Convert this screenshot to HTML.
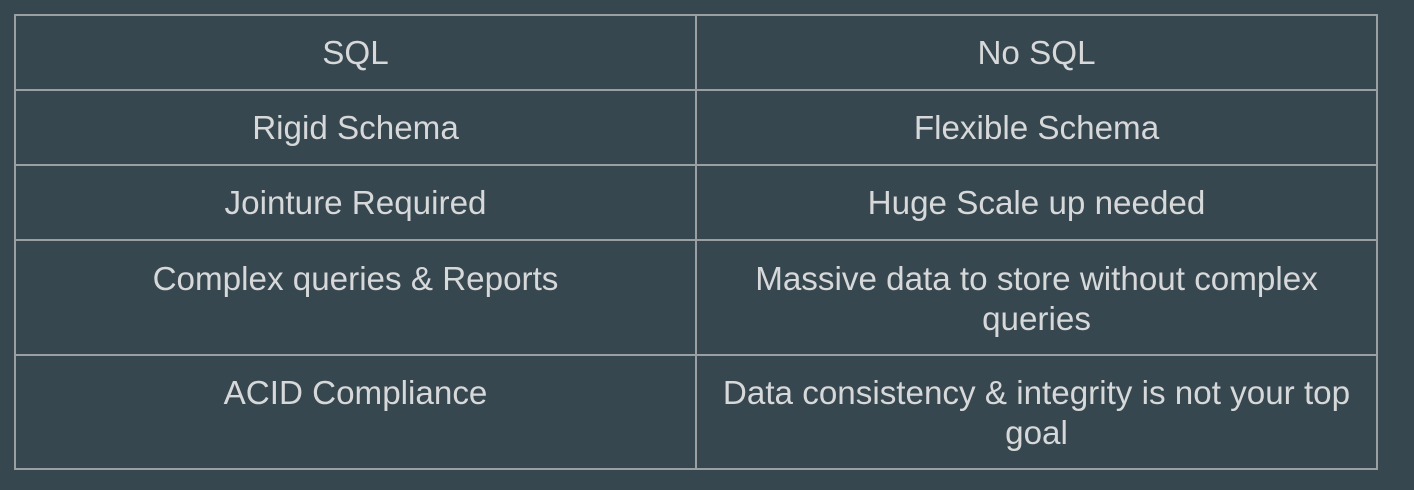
<!DOCTYPE html>
<html><head><style>
body{margin:0;width:1414px;height:490px;background:#37474f;overflow:hidden;font-family:"Liberation Sans",Arial,sans-serif;}
.h{position:absolute;left:14px;width:1364px;height:2px;background:#9a9fa2;}
.v{position:absolute;top:14px;height:456px;width:2px;background:#9a9fa2;}
.c{position:absolute;color:#d6d8d9;font-size:33.2px;line-height:40px;text-align:center;display:flex;align-items:center;justify-content:center;white-space:nowrap;}
</style></head><body>
<div class="h" style="top:14px"></div>
<div class="h" style="top:89px"></div>
<div class="h" style="top:164px"></div>
<div class="h" style="top:239px"></div>
<div class="h" style="top:354px"></div>
<div class="h" style="top:468px"></div>
<div class="v" style="left:14px"></div>
<div class="v" style="left:695px"></div>
<div class="v" style="left:1376px"></div>

<div class="c" style="left:16px;width:679px;top:17px;height:73px">SQL</div>
<div class="c" style="left:697px;width:679px;top:17px;height:73px">No SQL</div>
<div class="c" style="left:16px;width:679px;top:92px;height:73px">Rigid Schema</div>
<div class="c" style="left:697px;width:679px;top:92px;height:73px">Flexible Schema</div>
<div class="c" style="left:16px;width:679px;top:167px;height:73px">Jointure Required</div>
<div class="c" style="left:697px;width:679px;top:167px;height:73px">Huge Scale up needed</div>
<div class="c" style="left:16px;width:679px;top:260px;height:40px">Complex queries &amp; Reports</div>
<div class="c" style="left:697px;width:679px;top:260px;height:80px">Massive data to store without complex<br>queries</div>
<div class="c" style="left:16px;width:679px;top:374px;height:40px">ACID Compliance</div>
<div class="c" style="left:697px;width:679px;top:374px;height:80px">Data consistency &amp; integrity is not your top<br>goal</div>
</body></html>
